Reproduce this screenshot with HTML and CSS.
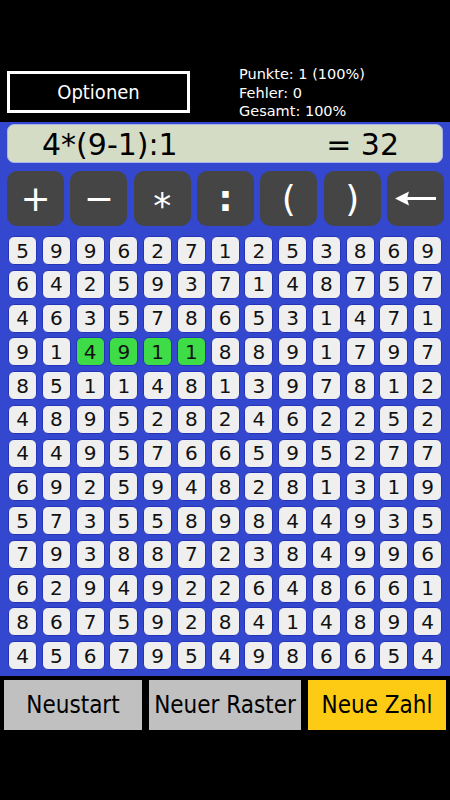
FILE: index.html
```html
<!DOCTYPE html>
<html lang="de">

<head>
    <meta charset="UTF-8">
    <meta name="viewport" content="width=device-width, initial-scale=1.0">
    <title>Zahlenraster</title>

    <link rel="stylesheet" href="styles.css">
</head>

<body>
    <div class="top">
        <button class="options">Optionen</button>
        <div class="stats">
            <div>Punkte: 1 (100%)</div>
            <div>Fehler: 0</div>
            <div>Gesamt: 100%</div>
        </div>
    </div>

    <div class="board">
        <div class="display">
            <span class="term">4*(9-1):1</span>
            <span class="result">= 32</span>
        </div>

        <div class="ops">
            <button>+</button>
            <button>−</button>
            <button><span class="star">*</span></button>
            <button class="colon">:</button>
            <button>(</button>
            <button>)</button>
            <button>
                <svg width="41" height="15" viewBox="0 0 41 15">
                    <polygon points="0,7.5 14,0.5 12,7.5 14,14.5" fill="#fff" />
                    <rect x="12" y="6" width="29" height="3" fill="#fff" />
                </svg>
            </button>
        </div>

        <div class="grid" id="grid"></div>
    </div>

    <div class="actions">
        <button class="gray">Neustart</button>
        <button class="gray wide">Neuer Raster</button>
        <button class="yellow">Neue Zahl</button>
    </div>

    <script>
        const rows = [
            '5996271253869',
            '6425937148757',
            '4635786531471',
            '9149118891797',
            '8511481397812',
            '4895282462252',
            '4495766595277',
            '6925948281319',
            '5735589844935',
            '7938872384996',
            '6294922648661',
            '8675928414894',
            '4567954986654'
        ];
        const picked = [[3, 2], [3, 3], [3, 4], [3, 5]];

        const grid = document.getElementById('grid');
        rows.forEach(function (row, r) {
            row.split('').forEach(function (digit, c) {
                const cell = document.createElement('div');
                cell.className = 'cell';
                if (picked.some(function (p) { return p[0] === r && p[1] === c; })) {
                    cell.className += ' on';
                }
                cell.textContent = digit;
                grid.appendChild(cell);
            });
        });
    </script>
</body>

</html>
```

FILE: styles.css
```css
body {
    margin: 0;
    width: 450px;
    height: 800px;
    background-color: #000;
    font-family: 'DejaVu Sans', sans-serif;
    overflow: hidden;
}

button {
    font-family: inherit;
    cursor: pointer;
}

.top {
    height: 122px;
    display: flex;
    padding-left: 7px;
    box-sizing: border-box;
}

.options {
    margin-top: 71px;
    width: 183px;
    height: 42px;
    border: 3px solid #fff;
    background-color: #000;
    color: #fff;
    font-family: 'DejaVu Sans Condensed', 'DejaVu Sans', sans-serif;
    font-stretch: condensed;
    font-size: 20px;
    padding: 0;
}

.stats {
    margin-top: 65px;
    margin-left: 49px;
    color: #fff;
    font-size: 14.5px;
    line-height: 18.5px;
}

.board {
    height: 554px;
    background-color: #3347cf;
    padding: 2px 7px 0 7px;
    box-sizing: border-box;
}

.display {
    display: flex;
    height: 39px;
    width: 436px;
    box-sizing: border-box;
    background-color: #d5dcc6;
    border: 1px solid #aab4e6;
    border-radius: 7px;
    font-size: 30px;
    line-height: 37px;
    padding-top: 1px;
    color: #000;
}

.term {
    padding-left: 34px;
}

.result {
    margin-left: auto;
    padding-right: 43px;
}

.ops {
    display: grid;
    grid-template-columns: repeat(7, 1fr);
    gap: 6.3px;
    margin-top: 8px;
    width: 437px;
}

.ops button {
    height: 55px;
    border: none;
    border-radius: 10px;
    background-color: #454545;
    color: #fff;
    font-size: 36px;
    padding: 0;
    display: flex;
    align-items: center;
    justify-content: center;
}

.ops .star {
    display: inline-block;
    transform: translateY(7px);
}

.ops .colon {
    font-weight: bold;
}

.grid {
    display: grid;
    grid-template-columns: repeat(13, 1fr);
    grid-template-rows: repeat(13, 1fr);
    gap: 4.75px;
    margin-top: 10px;
    margin-left: 1px;
    width: 434px;
    height: 434px;
}

.cell {
    display: flex;
    align-items: center;
    justify-content: center;
    background-color: #efefef;
    border: 1px solid #2434b8;
    border-radius: 6px;
    font-size: 20px;
    color: #111;
}

.cell.on {
    background-color: #3edc46;
}

.actions {
    display: flex;
    gap: 7px;
    padding: 4px 4px 0 4px;
}

.actions button {
    width: 138px;
    height: 50px;
    border: none;
    padding: 0;
    font-family: 'DejaVu Sans Condensed', 'DejaVu Sans', sans-serif;
    font-stretch: condensed;
    font-size: 24px;
    color: #000;
}

.actions .wide {
    width: 152px;
}

.gray {
    background-color: #c0c0c0;
}

.yellow {
    background-color: #fecb14;
}
```
